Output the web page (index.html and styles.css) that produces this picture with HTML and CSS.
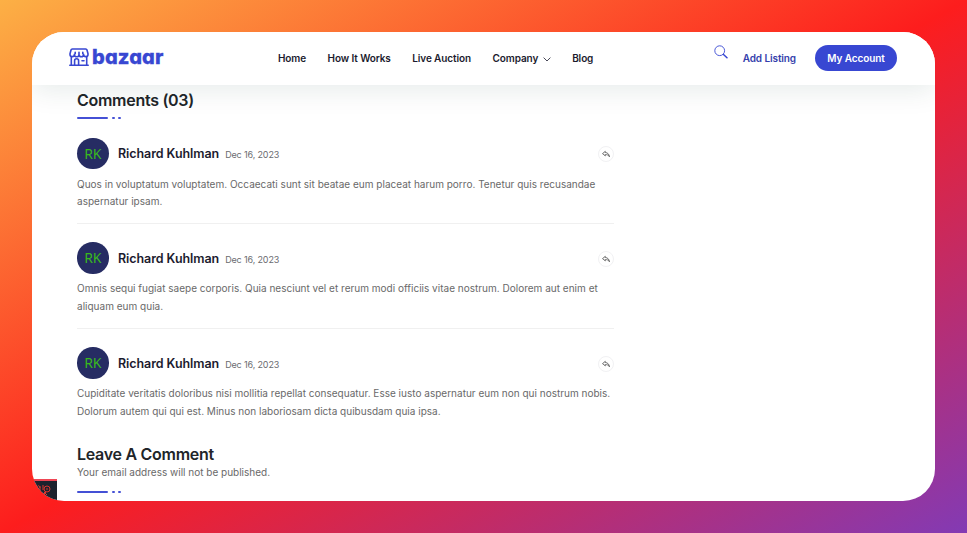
FILE: index.html
```html
<!DOCTYPE html>
<html lang="en">
<head>
<meta charset="utf-8">
<title>Bazaar</title>
<link rel="stylesheet" href="styles.css">
</head>
<body>
<svg class="defs" aria-hidden="true">
  <symbol id="reply" viewBox="0 0 16 16"><path d="M6.600 5V2.700L1 7.200l5.600 4.500V9.200c3.500-.1 6.400.8 8.300 4.300C14.600 9 11.500 5.200 6.600 5z" fill="none" stroke="currentColor" stroke-width="1.500" stroke-linejoin="round"/></symbol>
</svg>
<div class="window">
  <header class="header">
    <a class="logo">
      <svg class="logo-icon" viewBox="0 0 20 18" fill="none" stroke="currentColor" stroke-width="1.600" stroke-linecap="round" stroke-linejoin="round"><path d="M3.300 1h13.400q1 0 1.300 1l1 3.700v.7a2.200 2.200 0 0 1-4.400 0 2.200 2.200 0 0 1-4.600 0 2.200 2.200 0 0 1-4.600 0 2.200 2.200 0 0 1-4.400 0v-.7L2 2q.3-1 1.300-1z"/><path d="M6.200 4.300v1.500M10 4.300v1.500M13.800 4.300v1.500M2.300 9v8M17.700 9v8M.8 17.200h18.400M5.600 17v-4.300a2 2 0 0 1 4 0V17M13 12.700h2"/></svg>
      <span class="logo-text">bazaar</span>
    </a>
    <nav class="nav">
      <a>Home</a><a>How It Works</a><a>Live Auction</a>
      <a>Company <svg class="chev" viewBox="0 0 8 5"><path d="M.6.6 4 4 7.400.6" fill="none" stroke="currentColor" stroke-width=".8"/></svg></a>
      <a>Blog</a>
    </nav>
    <div class="actions">
      <svg class="search" viewBox="0 0 14 14" fill="none" stroke="currentColor"><circle cx="5.700" cy="5.700" r="4.900" stroke-width=".9"/><path d="m9.500 9.500 3.500 3.300" stroke-width="1.500" stroke-linecap="round"/></svg>
      <a class="add">Add Listing</a>
      <a class="account">My Account</a>
    </div>
  </header>
  <main class="content">
    <h2 class="title">Comments (03)</h2>
    <div class="rule"><i></i><i></i><i></i></div>
    <article class="comment">
      <div class="meta"><span class="avatar">RK</span><span class="name">Richard Kuhlman</span><time class="date">Dec 16, 2023</time><span class="reply"><svg><use href="#reply"/></svg></span></div>
      <p>Quos in voluptatum voluptatem. Occaecati sunt sit beatae eum placeat harum porro. Tenetur quis recusandae<br>aspernatur ipsam.</p>
    </article>
    <article class="comment">
      <div class="meta"><span class="avatar">RK</span><span class="name">Richard Kuhlman</span><time class="date">Dec 16, 2023</time><span class="reply"><svg><use href="#reply"/></svg></span></div>
      <p>Omnis sequi fugiat saepe corporis. Quia nesciunt vel et rerum modi officiis vitae nostrum. Dolorem aut enim et<br>aliquam eum quia.</p>
    </article>
    <article class="comment">
      <div class="meta"><span class="avatar">RK</span><span class="name">Richard Kuhlman</span><time class="date">Dec 16, 2023</time><span class="reply"><svg><use href="#reply"/></svg></span></div>
      <p>Cupiditate veritatis doloribus nisi mollitia repellat consequatur. Esse iusto aspernatur eum non qui nostrum nobis.<br>Dolorum autem qui qui est. Minus non laboriosam dicta quibusdam quia ipsa.</p>
    </article>
    <h2 class="title leave-title">Leave A Comment</h2>
    <p class="note">Your email address will not be published.</p>
    <div class="rule form-rule"><i></i><i></i><i></i></div>
  </main>
  <div class="debug"><svg viewBox="0 0 25 22" fill="none" stroke="#d9362f" stroke-width="1"><path d="M5 7c0-3 3-3 3 0M8 10V5M11 4v5"/><circle cx="15" cy="8" r="3"/><path d="M14 8h2M14 11l-3 3M12 11l3 3"/></svg></div>
</div>
</body>
</html>
```
FILE: styles.css
```css
* { box-sizing: border-box; }
body { margin: 0; height: 533px; padding: 32px; overflow: hidden; font-family: Inter, sans-serif; background: linear-gradient(to bottom right, #fcb045, #fd1d1d 50%, #833ab4); }
.defs { display: none; }
.window { position: relative; width: 903px; height: 469px; border-radius: 32px; overflow: hidden; background: #fff; }
.header { position: relative; height: 53px; display: flex; align-items: center; padding: 0 38px 0 37px; background: #fff; box-shadow: 0 5px 28px rgba(10, 60, 50, .1); }
.logo { display: flex; width: 209px; margin-top: -3px; color: #3847d2; }
.logo-icon { width: 20px; height: 18px; margin-top: 2px; }
.logo-text { margin-left: 3px; font-size: 20px; line-height: 22px; font-weight: 800; letter-spacing: .15px; font-feature-settings: "cv11"; -webkit-text-stroke: .3px currentColor; }
.nav { display: flex; gap: 21.500px; margin-top: -2px; font-size: 10px; line-height: 16px; font-weight: 600; color: #1b1b2e; white-space: nowrap; letter-spacing: -.1px; }
.chev { width: 8px; height: 5px; margin-left: 2px; vertical-align: 0; }
.actions { display: flex; align-items: center; margin-left: auto; white-space: nowrap; font-size: 10px; font-weight: 600; }
.search { width: 14px; height: 14px; margin: 0 15px 14px 0; color: #3847d2; }
.add { margin-top: -1px; color: #343eac; letter-spacing: -.1px; }
.account { width: 82px; height: 26px; margin: -1px 0 0 19px; border-radius: 13px; background: #3847d2; color: #fff; line-height: 27px; text-align: center; letter-spacing: -.1px; }
.content { width: 582px; padding: 4px 0 0 45px; }
.title { margin: 0; font-size: 16px; line-height: 22px; font-weight: 600; color: #212529; letter-spacing: -.28px; }
.rule { display: flex; gap: 3.500px; margin-top: 6px; }
.rule i { width: 3px; height: 2px; border-radius: 1px; background: #4450d5; }
.rule i:first-child { width: 31px; }
.comment { height: 104.800px; padding-top: 18.600px; border-bottom: 1px solid #f0f0f0; }
.comment:first-of-type { height: 104.900px; padding-top: 18.500px; }
.comment:nth-of-type(3) { border: 0; }
.meta { display: flex; align-items: center; height: 31.500px; }
.avatar { width: 31.500px; height: 31.500px; border-radius: 50%; background: #262c63; color: #39b81d; font-family: "Noto Sans", sans-serif; font-size: 14px; line-height: 31px; text-align: center; letter-spacing: -.2px; }
.name { margin: 0 0 0 9.500px; font-size: 12.500px; font-weight: 600; color: #1b1b2e; white-space: nowrap; letter-spacing: -.07px; }
.date { margin: 2px 0 0 6px; font-size: 9px; color: #6b6b70; white-space: nowrap; letter-spacing: -.14px; }
.reply { display: flex; align-items: center; justify-content: center; width: 16px; height: 16px; margin: 1px 0 0 auto; border: 1px solid #f1f1f3; border-radius: 50%; color: #444; }
.reply svg { width: 8px; height: 8px; }
.comment p { margin: 6.500px 0 0; font-size: 10px; line-height: 17.500px; color: #696969; white-space: nowrap; letter-spacing: .01px; }
.leave-title { margin-top: 9.500px; }
.note { margin: 0; font-size: 10px; line-height: 14px; color: #696969; }
.form-rule { margin-top: 12px; }
.debug { position: absolute; left: 0; bottom: 0; width: 25px; height: 22px; border-top: 2px solid #ef4654; background: #1c222d; }
.debug svg { display: block; width: 25px; height: 22px; }
```
